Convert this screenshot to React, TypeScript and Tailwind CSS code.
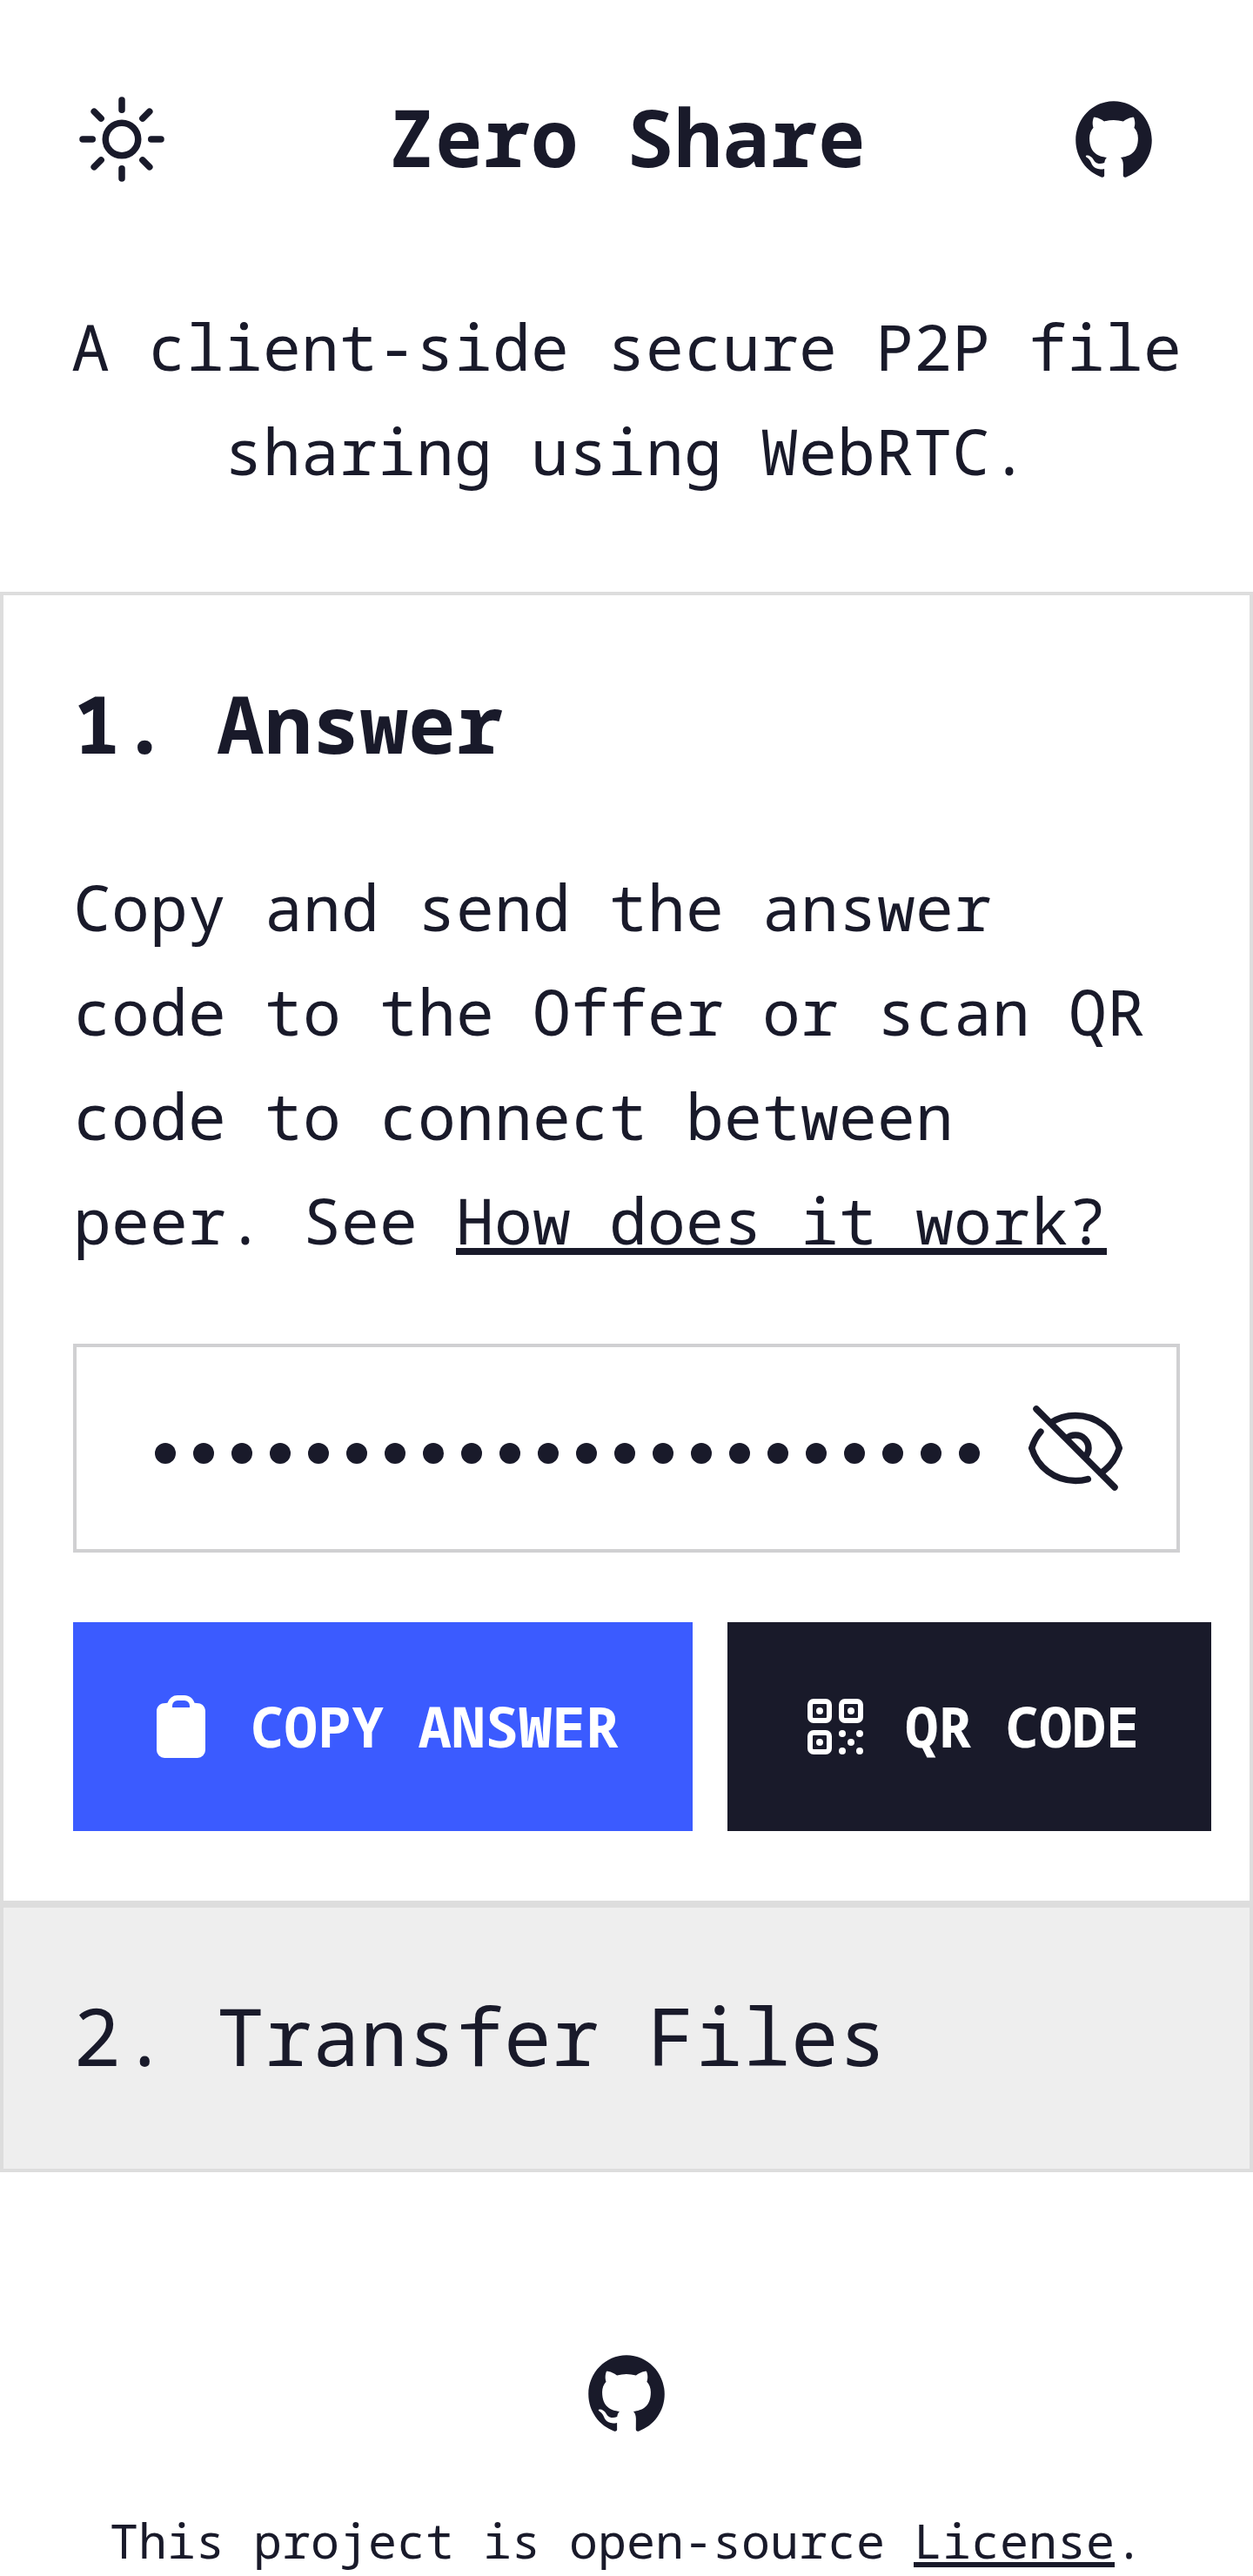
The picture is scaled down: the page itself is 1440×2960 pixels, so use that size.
import { IoLogoGithub } from "react-icons/io5";
import { HiOutlineEyeSlash, HiOutlineSun } from "react-icons/hi2";

const MASK_LENGTH = 22;

function ClipboardIcon() {
  return (
    <svg viewBox="0 0 20 20" fill="currentColor" className="size-20 shrink-0">
      <path
        fillRule="evenodd"
        clipRule="evenodd"
        d="M13.887 3.182c.396.037.79.08 1.183.128C16.194 3.45 17 4.414 17 5.517V16.75A2.25 2.25 0 0114.75 19h-9.5A2.25 2.25 0 013 16.75V5.517c0-1.103.806-2.068 1.93-2.207.393-.048.787-.09 1.183-.128A3.001 3.001 0 019 1h2c1.373 0 2.531.923 2.887 2.182zM7.5 4A1.5 1.5 0 019 2.5h2A1.5 1.5 0 0112.5 4v.5h-5V4z"
      />
    </svg>
  );
}

function QrIcon() {
  const frames = [
    [2, 2],
    [11, 2],
    [2, 11],
  ];
  const dots = [
    [5.5, 5.5],
    [14.5, 5.5],
    [5.5, 14.5],
    [12, 12],
    [17, 12],
    [14.5, 14.5],
    [12, 17],
    [17, 17],
  ];
  return (
    <svg viewBox="0 0 20 20" fill="none" className="size-20 shrink-0">
      {frames.map(([x, y]) => (
        <rect
          key={`${x}-${y}`}
          x={x + 0.75}
          y={y + 0.75}
          width={5.5}
          height={5.5}
          rx={1}
          stroke="currentColor"
          strokeWidth={1.5}
        />
      ))}
      {dots.map(([x, y]) => (
        <circle key={`${x}-${y}`} cx={x} cy={y} r={1} fill="currentColor" />
      ))}
    </svg>
  );
}

export default function App() {
  return (
    <div className="flex h-[2960px] w-[1440px] flex-col overflow-hidden bg-white font-['Noto_Sans_Mono','DejaVu_Sans_Mono',monospace] text-[#191a2a]">
      <header className="flex h-[338px] shrink-0 items-start">
        <button className="mt-[100px] flex h-[120px] w-[280px] items-center justify-center">
          <HiOutlineSun className="size-[120px]" />
        </button>
        <h1 className="mt-[97px] flex-1 pl-10 text-center text-[91px] leading-[120px] font-bold tracking-[0.4px] whitespace-nowrap">
          Zero Share
        </h1>
        <a className="mt-[100px] flex h-[120px] w-[320px] items-center justify-center">
          <IoLogoGithub className="size-[100px]" />
        </a>
      </header>

      <p className="h-[342px] shrink-0 text-center text-[73px] leading-[120px] tracking-[0.2px]">
        A client-side secure P2P file
        <br />
        sharing using WebRTC.
      </p>

      <section className="h-[1508px] shrink-0 border-4 border-[#ddd] px-20 pt-[87px]">
        <h2 className="text-[91px] leading-[120px] font-bold tracking-[0.4px]">1. Answer</h2>
        <p className="mt-[91px] text-[73px] leading-[120px] tracking-[0.2px] whitespace-nowrap">
          Copy and send the answer
          <br />
          code to the Offer or scan QR
          <br />
          code to connect between
          <br />
          peer. See{" "}
          <a className="underline decoration-8 underline-offset-4 [text-decoration-skip-ink:none]">
            How does it work?
          </a>
        </p>

        <div className="mt-[82px] flex h-60 items-center border-4 border-[#d0d0d2] pl-[90px]">
          <div className="flex gap-5 pt-3">
            {Array.from({ length: MASK_LENGTH }, (_, i) => (
              <span key={i} className="size-6 rounded-full bg-[#191a2a]" />
            ))}
          </div>
          <HiOutlineEyeSlash className="ml-[50px] size-[120px] shrink-0" />
        </div>

        <div className="mt-20 flex gap-10 text-[64px] font-bold tracking-[0.1px] whitespace-nowrap text-white">
          <button className="flex h-60 w-[712px] shrink-0 items-center gap-10 bg-[#3b5bff] pl-[84px]">
            <ClipboardIcon />
            COPY ANSWER
          </button>
          <button className="flex h-60 w-[556px] shrink-0 items-center gap-10 bg-[#191a2a] pl-[84px]">
            <QrIcon />
            QR CODE
          </button>
        </div>
      </section>

      <section className="h-[308px] shrink-0 border-4 border-[#ddd] bg-[#eee] px-20 pt-[87px]">
        <h2 className="text-[91px] leading-[120px] tracking-[0.4px]">2. Transfer Files</h2>
      </section>

      <footer className="flex flex-col items-center pt-[204px]">
        <IoLogoGithub className="size-[100px]" />
        <p className="mt-[74px] text-[55px] leading-[90px] whitespace-nowrap">
          This project is open-source{" "}
          <a className="underline decoration-[6px] underline-offset-4 [text-decoration-skip-ink:none]">License</a>.
        </p>
      </footer>
    </div>
  );
}
